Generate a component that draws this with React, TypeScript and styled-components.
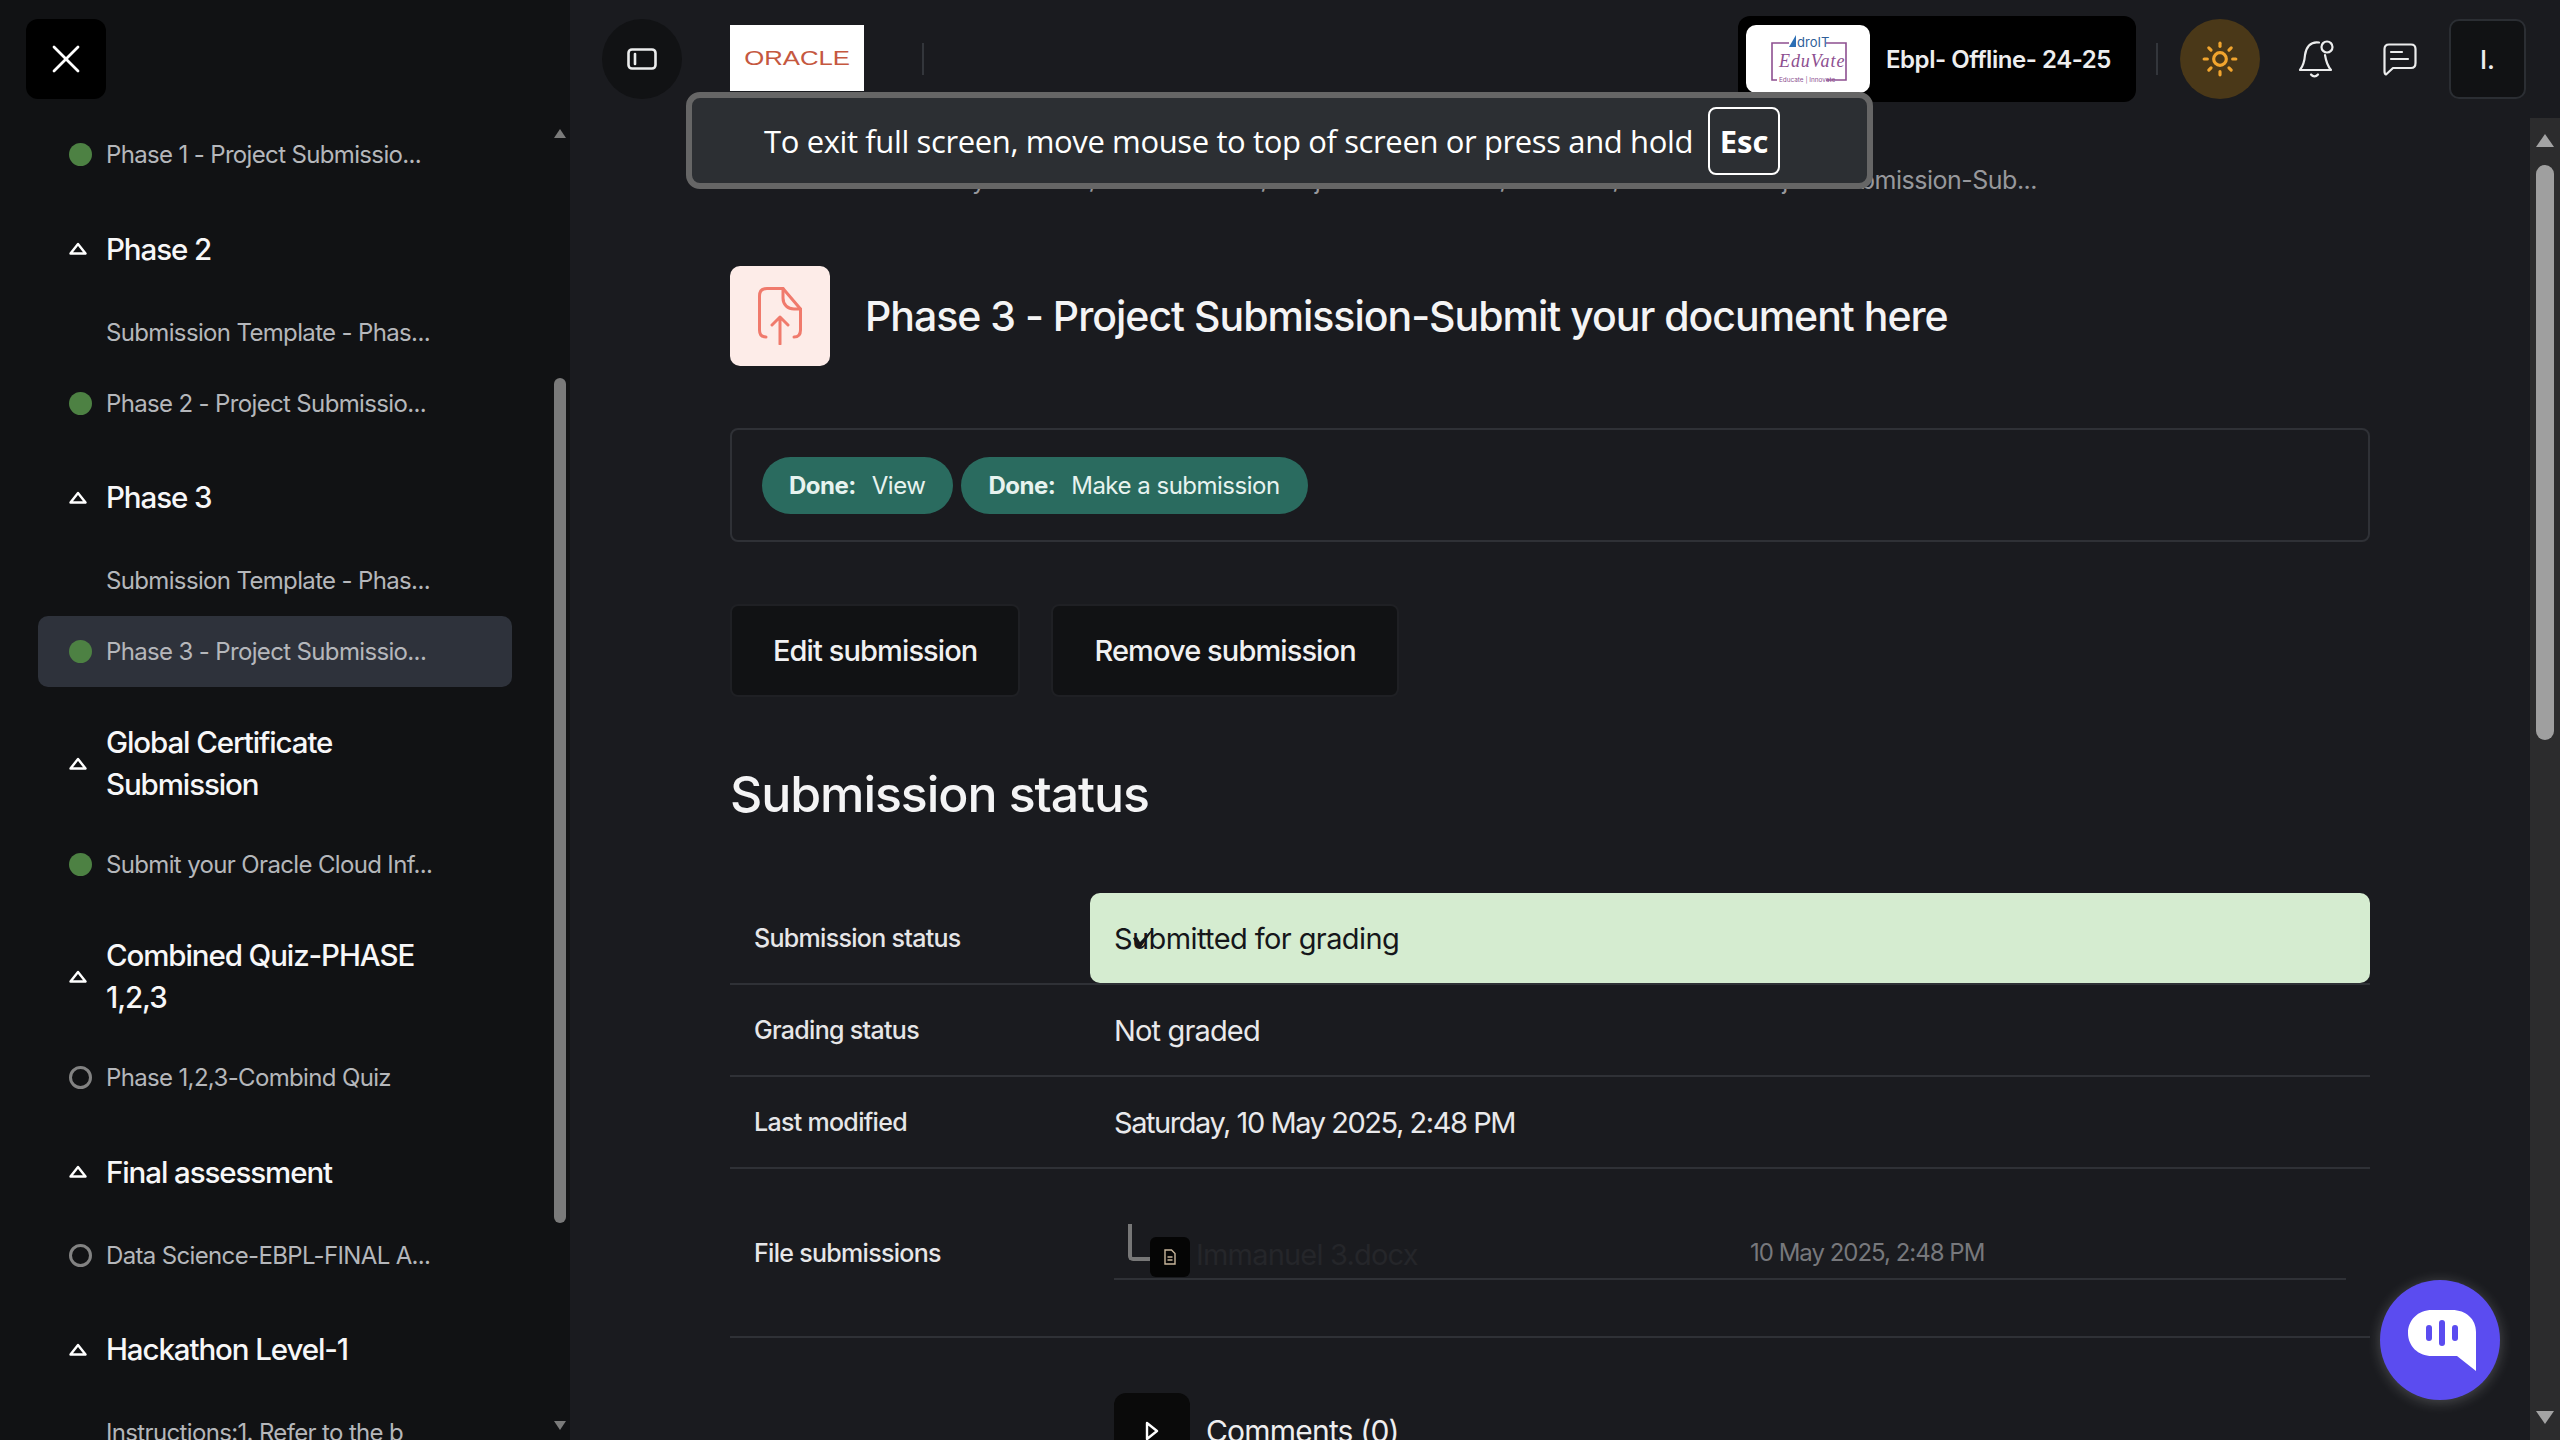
import { ReactNode } from 'react'
import styled, { createGlobalStyle } from 'styled-components'
import { Sun, X } from 'lucide-react'

const GlobalStyle = createGlobalStyle`
  html, body {
    margin: 0;
    padding: 0;
    height: 100%;
    overflow: hidden;
    background: #1a1b1f;
  }
  * {
    box-sizing: border-box;
  }
  body {
    font-family: Inter, "Noto Sans", sans-serif;
    color: #f1f1f2;
  }
`

type Status = 'done' | 'todo' | 'none'

interface ActivityData {
  title: string
  status: Status
  active?: boolean
}

interface SectionData {
  title: string[]
  items: ActivityData[]
}

const sections: SectionData[] = [
  {
    title: ['Phase 2'],
    items: [
      { title: 'Submission Template - Phas...', status: 'none' },
      { title: 'Phase 2 - Project Submissio...', status: 'done' },
    ],
  },
  {
    title: ['Phase 3'],
    items: [
      { title: 'Submission Template - Phas...', status: 'none' },
      { title: 'Phase 3 - Project Submissio...', status: 'done', active: true },
    ],
  },
  {
    title: ['Global Certificate', 'Submission'],
    items: [{ title: 'Submit your Oracle Cloud Inf...', status: 'done' }],
  },
  {
    title: ['Combined Quiz-PHASE', '1,2,3'],
    items: [{ title: 'Phase 1,2,3-Combind Quiz', status: 'todo' }],
  },
  {
    title: ['Final assessment'],
    items: [{ title: 'Data Science-EBPL-FINAL A...', status: 'todo' }],
  },
  {
    title: ['Hackathon Level-1'],
    items: [{ title: 'Instructions:1. Refer to the b', status: 'none' }],
  },
]

const CollapseIcon = () => (
  <svg width="18" height="13" viewBox="0 0 18 13" fill="none">
    <path d="M9 2 L16.5 11.5 H1.5 Z" stroke="#fff" strokeWidth="2.4" strokeLinejoin="round" />
  </svg>
)

const Activity = ({ title, status, active }: ActivityData) => (
  <ActivityRow $active={active}>
    <StatusDot $status={status} />
    <ActivityTitle>{title}</ActivityTitle>
  </ActivityRow>
)

const Section = ({ title, items }: SectionData) => (
  <SectionBlock $compact={title.length > 1}>
    <SectionHead $compact={title.length > 1}>
      <CollapseIcon />
      <SectionTitle>
        {title.map((line) => (
          <div key={line}>{line}</div>
        ))}
      </SectionTitle>
    </SectionHead>
    {items.map((item) => (
      <Activity key={item.title + item.status} {...item} />
    ))}
  </SectionBlock>
)

const Rail = ({ wide, children }: { wide?: boolean; children: ReactNode }) => (
  <RailBox $wide={wide}>
    <RailArrow $wide={wide} />
    {children}
    <RailArrow $wide={wide} $down />
  </RailBox>
)

const OracleLogo = () => (
  <OracleBox>
    <OracleWord>ORACLE</OracleWord>
  </OracleBox>
)

const EduvateLogo = () => (
  <svg width="124" height="68" viewBox="0 0 124 68">
    <path
      d="M43 18 H26 V55 H31 M80 18 H100 V55 H80"
      fill="none"
      stroke="#8d4f90"
      strokeWidth="1.6"
    />
    <path d="M43 22 L50 10 V22 Z" fill="#2c6fb5" />
    <text x="51" y="22" fontSize="13" fill="#2f5f9a" fontFamily="Inter, sans-serif">
      droIT
    </text>
    <text x="33" y="42" fontSize="18" letterSpacing="0.9" fill="#8d4f90" fontStyle="italic" fontFamily="Liberation Serif, serif">
      EduVate
    </text>
    <text x="33" y="57" fontSize="6.4" fill="#8d4f90" fontFamily="Inter, sans-serif">
      Educate | Innovate
    </text>
  </svg>
)

const BellIcon = () => (
  <svg width="36" height="38" viewBox="0 0 36 38" fill="none" stroke="#eceded" strokeWidth="2.2" strokeLinecap="round" strokeLinejoin="round">
    <path d="M21 2.5 C12 1 8 8 7 15 C6.500 22 5 26 2 30 H33 C29.500 26 28 21 27 15" />
    <path d="M13 34.500 C15 37 18 37 20 34.500" />
    <circle cx="29" cy="7" r="5.500" />
  </svg>
)

const MessageIcon = () => (
  <svg width="34" height="33" viewBox="0 0 34 33" fill="none" stroke="#eceded" strokeWidth="2.200" strokeLinecap="round" strokeLinejoin="round">
    <path d="M6 1.500 H28 C31 1.500 32.500 3 32.500 6 V20 C32.500 23.500 31 25 28 25 H10 L3 31.500 C1.800 31 1.500 30 1.500 28 V6 C1.500 3 3 1.500 6 1.500 Z" />
    <path d="M8 9 H19 M8 16 H25" />
  </svg>
)

const PanelIcon = () => (
  <svg width="30" height="22" viewBox="0 0 30 22" fill="none" stroke="#eceded" strokeWidth="2.6">
    <rect x="1.5" y="1.5" width="27" height="19" rx="3.5" />
    <path d="M8 6 V16" strokeLinecap="round" />
  </svg>
)

const UploadFileIcon = () => (
  <svg width="44" height="58" viewBox="0 0 44 58" fill="none" stroke="#f07a6c" strokeWidth="3" strokeLinecap="round" strokeLinejoin="round">
    <path d="M8 50 C3 50 1.5 47 1.5 43 V9 C1.5 4 4 1.5 9 1.5 H25 L42.5 22 V43 C42.5 47 41 50 36 50" />
    <path d="M25 1.5 V11 C25 18 30 22 36 22 H42.5" />
    <path d="M22 57 V30 M14 38 L22 30 L30 38" />
  </svg>
)

const TinyFileIcon = () => (
  <svg width="12" height="16" viewBox="0 0 12 16" fill="none" stroke="#c9b79c" strokeWidth="1.4">
    <path d="M1 1 H7.5 L11 4.5 V15 H1 Z" />
    <path d="M3.5 8 H8.5 M3.5 11 H8.5" />
  </svg>
)

const CheckIcon = () => (
  <svg width="20" height="18" viewBox="0 0 20 18">
    <path d="M0 8 L4 7 L7 12 L18.500 0 L19.500 0.500 L7.500 18 L5 18 Z" fill="#15161a" />
  </svg>
)

const ChatIcon = () => (
  <svg width="68" height="62" viewBox="0 0 68 62">
    <path
      d="M24 0 H44 C58 0 68 9 68 22 V61 L49 46 H24 C10 46 0 36 0 23 C0 10 10 0 24 0 Z"
      fill="#fff"
    />
    <rect x="18" y="15" width="6" height="16" rx="3" fill="#5b4cf0" />
    <rect x="31" y="10" width="6" height="26" rx="3" fill="#5b4cf0" />
    <rect x="44" y="15" width="6" height="16" rx="3" fill="#5b4cf0" />
  </svg>
)

const App = () => {
  return (
    <Page>
      <GlobalStyle />
      <Sidebar>
        <SidebarTop>
          <CloseButton>
            <X size={48} strokeWidth={1.4} color="#fff" />
          </CloseButton>
        </SidebarTop>
        <SidebarBody>
          <ActivityList>
            <Activity title="Phase 1 - Project Submissio..." status="done" />
            {sections.map((section) => (
              <Section key={section.title[0]} {...section} />
            ))}
          </ActivityList>
          <Rail>
            <SideThumb />
          </Rail>
        </SidebarBody>
      </Sidebar>

      <Main>
        <Header>
          <RoundButton>
            <PanelIcon />
          </RoundButton>
          <OracleLogo />
          <Divider />
          <HeaderRight>
            <SchoolPill>
              <SchoolLogo>
                <EduvateLogo />
              </SchoolLogo>
              <SchoolName>Ebpl- Offline- 24-25</SchoolName>
            </SchoolPill>
            <RightDivider />
            <SunButton>
              <Sun size={38} strokeWidth={2} color="#f2a52e" />
            </SunButton>
            <HeaderIcon $gap={36}>
              <BellIcon />
            </HeaderIcon>
            <HeaderIcon $gap={44}>
              <MessageIcon />
            </HeaderIcon>
            <ProfileButton>I.</ProfileButton>
          </HeaderRight>
        </Header>

        <MainBody>
          <Content>
            <Breadcrumb>
              My courses / Data Science / Project Submission / Phase 3 / Phase 3 - Project Submission-Sub...
            </Breadcrumb>
            <TitleRow>
              <TitleIcon>
                <UploadFileIcon />
              </TitleIcon>
              <PageTitle>Phase 3 - Project Submission-Submit your document here</PageTitle>
            </TitleRow>
            <CompletionBox>
              <DoneBadge>
                <strong>Done:</strong> View
              </DoneBadge>
              <DoneBadge>
                <strong>Done:</strong> Make a submission
              </DoneBadge>
            </CompletionBox>
            <ActionRow>
              <ActionButton>Edit submission</ActionButton>
              <ActionButton>Remove submission</ActionButton>
            </ActionRow>
            <StatusHeading>Submission status</StatusHeading>
            <StatusTable>
              <StatusRow>
                <RowLabel>Submission status</RowLabel>
                <SubmittedCell>
                  Submitted for grading
                  <CheckMark>
                    <CheckIcon />
                  </CheckMark>
                </SubmittedCell>
              </StatusRow>
              <StatusRow>
                <RowLabel>Grading status</RowLabel>
                <RowValue>Not graded</RowValue>
              </StatusRow>
              <StatusRow>
                <RowLabel>Last modified</RowLabel>
                <DateValue>Saturday, 10 May 2025, 2:48 PM</DateValue>
              </StatusRow>
              <FileStatusRow>
                <RowLabel>File submissions</RowLabel>
                <FileRow>
                  <TreeLine />
                  <FileBadge>
                    <TinyFileIcon />
                  </FileBadge>
                  <FileName>Immanuel 3.docx</FileName>
                  <FileDate>10 May 2025, 2:48 PM</FileDate>
                </FileRow>
              </FileStatusRow>
            </StatusTable>
            <CommentsRow>
              <CommentsToggle>
                <svg width="14" height="20" viewBox="0 0 14 20" fill="none">
                  <path d="M2 2 L12 10 L2 18 Z" stroke="#fff" strokeWidth="2.4" strokeLinejoin="round" />
                </svg>
              </CommentsToggle>
              <CommentsLabel>Comments (0)</CommentsLabel>
            </CommentsRow>
          </Content>
          <Rail wide>
            <MainThumb />
          </Rail>
        </MainBody>
      </Main>

      <FullscreenNotice>
        <NoticeText>To exit full screen, move mouse to top of screen or press and hold</NoticeText>
        <EscKey>Esc</EscKey>
      </FullscreenNotice>
      <ChatFab>
        <ChatIcon />
      </ChatFab>
    </Page>
  )
}

const Page = styled.div`
  position: relative;
  display: flex;
  width: 2560px;
  height: 1440px;
  overflow: hidden;
  background: #1a1b1f;
`

const Sidebar = styled.aside`
  display: flex;
  flex-direction: column;
  width: 570px;
  flex-shrink: 0;
  background: #111214;
`

const SidebarTop = styled.div`
  height: 118px;
  padding: 19px 26px;
  flex-shrink: 0;
`

const CloseButton = styled.button`
  display: flex;
  align-items: center;
  justify-content: center;
  width: 80px;
  height: 80px;
  padding: 0;
  border: 0;
  border-radius: 12px;
  background: #000;
`

const SidebarBody = styled.div`
  display: flex;
  flex: 1;
  min-height: 0;
`

const ActivityList = styled.div`
  flex: 1;
  min-width: 0;
  overflow: hidden;
  padding: 1px 42px 0 38px;
`

const SectionBlock = styled.section<{ $compact?: boolean }>`
  padding-top: ${({ $compact }) => ($compact ? '34px' : '37.5px')};
`

const SectionHead = styled.div<{ $compact?: boolean }>`
  display: flex;
  align-items: center;
  gap: 19px;
  padding-left: 31px;
  margin-bottom: ${({ $compact }) => ($compact ? '24px' : '27px')};
`

const SectionTitle = styled.div`
  font-size: 29.5px;
  line-height: 42px;
  font-weight: 500;
  letter-spacing: -1.1px;
  color: #f7f7f8;
`

const ActivityRow = styled.div<{ $active?: boolean }>`
  display: flex;
  align-items: center;
  gap: 14px;
  height: 71px;
  padding-left: 31px;
  border-radius: 10px;
  background: ${({ $active }) => ($active ? '#2e323b' : 'transparent')};
`

const StatusDot = styled.span<{ $status: Status }>`
  width: 23px;
  height: 23px;
  flex-shrink: 0;
  border-radius: 50%;
  background: ${({ $status }) => ($status === 'done' ? '#4d8143' : 'transparent')};
  border: ${({ $status }) => ($status === 'todo' ? '3.5px solid #828282' : '0')};
`

const ActivityTitle = styled.span`
  font-size: 24px;
  letter-spacing: -0.65px;
  color: #b5b7bb;
  white-space: nowrap;
`

const RailBox = styled.div<{ $wide?: boolean }>`
  display: flex;
  flex-direction: column;
  align-items: center;
  flex-shrink: 0;
  width: ${({ $wide }) => ($wide ? '30px' : '12px')};
  margin-right: ${({ $wide }) => ($wide ? '0' : '4px')};
  padding: ${({ $wide }) => ($wide ? '16px 0 16px' : '11px 0 10px')};
  background: ${({ $wide }) => ($wide ? '#2c2c2d' : 'transparent')};
`

const RailArrow = styled.span<{ $wide?: boolean; $down?: boolean }>`
  width: 0;
  height: 0;
  flex-shrink: 0;
  border-left: ${({ $wide }) => ($wide ? '9px' : '6px')} solid transparent;
  border-right: ${({ $wide }) => ($wide ? '9px' : '6px')} solid transparent;
  border-${({ $down }) => ($down ? 'top' : 'bottom')}: ${({ $wide }) => ($wide ? '13px' : '9px')} solid
    ${({ $wide }) => ($wide ? '#a3a3a3' : '#7a7a7a')};
  margin-top: ${({ $down }) => ($down ? 'auto' : '0')};
`

const SideThumb = styled.div`
  width: 12px;
  height: 845px;
  margin-top: 240px;
  border-radius: 6px;
  background: #7a7a7a;
`

const MainThumb = styled.div`
  width: 18px;
  height: 575px;
  margin-top: 18px;
  border-radius: 9px;
  background: #9f9f9f;
`

const Main = styled.main`
  display: flex;
  flex-direction: column;
  flex: 1;
  min-width: 0;
`

const Header = styled.header`
  display: flex;
  align-items: center;
  height: 118px;
  flex-shrink: 0;
  padding: 0 34px 0 32px;
`

const RoundButton = styled.button`
  display: flex;
  align-items: center;
  justify-content: center;
  width: 80px;
  height: 80px;
  padding: 0;
  border: 0;
  border-radius: 50%;
  background: #111214;
`

const OracleBox = styled.div`
  display: flex;
  align-items: center;
  justify-content: center;
  width: 134px;
  height: 66px;
  margin-left: 48px;
  margin-top: -2px;
  background: #fff;
`

const OracleWord = styled.span`
  display: inline-block;
  font-family: "Liberation Sans", sans-serif;
  font-size: 19.5px;
  color: #c5583f;
  transform: scaleX(1.32);
`

const Divider = styled.span`
  width: 2px;
  height: 32px;
  margin-left: 58px;
  background: #33363b;
`

const HeaderRight = styled.div`
  display: flex;
  align-items: center;
  margin-left: auto;
`

const SchoolPill = styled.div`
  display: flex;
  align-items: center;
  gap: 16px;
  width: 398px;
  height: 86px;
  padding-left: 8px;
  border-radius: 12px;
  background: #000;
`

const SchoolLogo = styled.div`
  display: flex;
  width: 124px;
  height: 68px;
  overflow: hidden;
  border-radius: 10px;
  background: #fff;
`

const SchoolName = styled.span`
  font-size: 24px;
  font-weight: 600;
  letter-spacing: -0.45px;
  color: #eeeeef;
  white-space: nowrap;
`

const RightDivider = styled.span`
  width: 2px;
  height: 32px;
  margin-left: 20px;
  background: #33363b;
`

const SunButton = styled.button`
  display: flex;
  align-items: center;
  justify-content: center;
  width: 80px;
  height: 80px;
  margin-left: 22px;
  padding: 0;
  border: 0;
  border-radius: 50%;
  background: #4a3818;
`

const HeaderIcon = styled.button<{ $gap: number }>`
  display: flex;
  align-items: center;
  justify-content: center;
  width: 40px;
  height: 44px;
  margin-left: ${({ $gap }) => $gap}px;
  padding: 0;
  border: 0;
  background: transparent;
`

const ProfileButton = styled.button`
  width: 77px;
  height: 80px;
  margin-left: 29px;
  padding: 0;
  border: 2px solid #2b2e33;
  border-radius: 10px;
  background: #111214;
  font-family: inherit;
  font-size: 26px;
  font-weight: 500;
  color: #eeeeef;
`

const MainBody = styled.div`
  display: flex;
  flex: 1;
  min-height: 0;
`

const Content = styled.div`
  flex: 1;
  min-width: 0;
  overflow: hidden;
  padding: 44px 160px 0 160px;
`

const Breadcrumb = styled.div`
  display: flex;
  justify-content: flex-end;
  height: 36px;
  margin-right: 333px;
  font-size: 25px;
  line-height: 36px;
  letter-spacing: -0.5px;
  color: #97989c;
  white-space: nowrap;
`

const TitleRow = styled.div`
  display: flex;
  align-items: center;
  gap: 35px;
  margin-top: 68px;
`

const TitleIcon = styled.div`
  display: flex;
  align-items: center;
  justify-content: center;
  width: 100px;
  height: 100px;
  border-radius: 10px;
  background: #fdece8;
`

const PageTitle = styled.h1`
  margin: 0;
  font-size: 41px;
  font-weight: 500;
  letter-spacing: -1px;
  color: #f4f4f5;
  white-space: nowrap;
`

const CompletionBox = styled.div`
  display: flex;
  align-items: center;
  gap: 8px;
  height: 114px;
  margin-top: 62px;
  padding-left: 30px;
  border: 2px solid #2f3136;
  border-radius: 8px;
`

const DoneBadge = styled.span`
  display: flex;
  align-items: center;
  gap: 8px;
  height: 57px;
  padding: 0 28px 0 27px;
  border-radius: 29px;
  background: #2a6b5f;
  font-size: 24px;
  letter-spacing: -0.5px;
  color: #e7f3ef;

  strong {
    font-weight: 700;
    margin-right: 8px;
  }
`

const ActionRow = styled.div`
  display: flex;
  gap: 31px;
  margin-top: 62px;
`

const ActionButton = styled.button`
  height: 93px;
  padding: 0 41px;
  border: 2px solid #1f2024;
  border-radius: 8px;
  background: #111214;
  font-family: inherit;
  font-size: 29px;
  font-weight: 500;
  letter-spacing: -0.9px;
  color: #f1f1f2;
`

const StatusHeading = styled.h2`
  margin: 66px 0 0;
  font-size: 50px;
  line-height: 62px;
  font-weight: 500;
  letter-spacing: -1.06px;
  color: #f4f4f5;
`

const StatusTable = styled.div`
  margin-top: 68px;
`

const StatusRow = styled.div`
  display: grid;
  grid-template-columns: 360px 1fr;
  align-items: stretch;
  min-height: 92px;
  border-bottom: 2px solid #2f3136;
`

const FileStatusRow = styled(StatusRow)`
  height: 169px;
  align-items: center;
`

const RowLabel = styled.div`
  display: flex;
  align-items: center;
  padding-left: 24px;
  font-size: 25px;
  font-weight: 500;
  letter-spacing: -0.7px;
  color: #e6e6e8;
`

const RowValue = styled.div`
  display: flex;
  align-items: center;
  padding-left: 24px;
  font-size: 29px;
  letter-spacing: -0.85px;
  color: #e9e9eb;
`

const DateValue = styled(RowValue)`
  letter-spacing: -1.45px;
`

const SubmittedCell = styled(RowValue)`
  position: relative;
  border-radius: 10px;
  background: #d5ecd0;
  color: #15161a;
  letter-spacing: -0.6px;
`

const CheckMark = styled.span`
  position: absolute;
  left: 43px;
  top: 37px;
  display: flex;
`

const FileRow = styled.div`
  display: flex;
  align-items: flex-start;
  height: 56px;
  margin: -2px 24px 0 24px;
  border-bottom: 2px solid #2f3136;
`

const TreeLine = styled.span`
  width: 22px;
  height: 37px;
  margin-left: 14px;
  border-left: 4px solid #777;
  border-bottom: 4px solid #777;
  border-bottom-left-radius: 5px;
`

const FileBadge = styled.span`
  display: flex;
  align-items: center;
  justify-content: center;
  width: 40px;
  height: 40px;
  margin-top: 13px;
  border-radius: 6px;
  background: #050505;
`

const FileName = styled.span`
  width: 554px;
  margin-left: 6px;
  padding-top: 13px;
  font-size: 29px;
  letter-spacing: -0.8px;
  color: #25262a;
`

const FileDate = styled.span`
  padding-top: 14px;
  font-size: 24px;
  letter-spacing: -1px;
  color: #77787c;
`

const CommentsRow = styled.div`
  display: flex;
  align-items: flex-start;
  gap: 16px;
  margin-top: 55px;
  margin-left: 384px;
`

const CommentsToggle = styled.span`
  display: flex;
  align-items: center;
  justify-content: center;
  width: 76px;
  height: 76px;
  border-radius: 12px;
  background: #0a0a0a;
`

const CommentsLabel = styled.span`
  font-size: 30px;
  line-height: 76px;
  letter-spacing: -0.8px;
  color: #eeeeef;
`

const FullscreenNotice = styled.div`
  position: absolute;
  top: 92px;
  left: 686px;
  display: flex;
  align-items: center;
  gap: 15px;
  width: 1187px;
  height: 97px;
  padding-left: 72px;
  border: 6px solid #666666;
  border-radius: 14px;
  background: #2c2f33;
`

const NoticeText = styled.span`
  font-family: "Open Sans", "Noto Sans", sans-serif;
  font-size: 31px;
  letter-spacing: -0.38px;
  color: #fff;
  white-space: nowrap;
`

const EscKey = styled.span`
  display: flex;
  align-items: center;
  justify-content: center;
  width: 72px;
  height: 68px;
  border: 2px solid #fff;
  border-radius: 8px;
  font-family: "Open Sans", "Noto Sans", sans-serif;
  font-size: 31px;
  font-weight: 700;
  color: #fff;
`

const ChatFab = styled.div`
  position: absolute;
  left: 2380px;
  top: 1280px;
  display: flex;
  align-items: center;
  justify-content: center;
  width: 120px;
  height: 120px;
  padding-left: 3px;
  padding-top: 2px;
  border-radius: 50%;
  background: #5b4cf0;
  box-shadow: 0 2px 14px rgba(255, 255, 255, 0.22);
`

export default App
